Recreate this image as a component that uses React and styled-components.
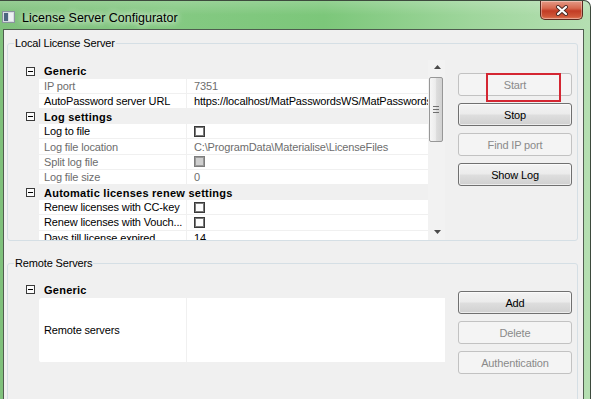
import React from 'react';
import styled, { createGlobalStyle, css } from 'styled-components';

const Global = createGlobalStyle`
  html, body { margin: 0; padding: 0; background: #ffffff; }
  body { font-family: "Liberation Sans", Arial, sans-serif; font-size: 11px; color: #000; letter-spacing: -0.15px; }
  * { box-sizing: border-box; }
`;

const Screen = styled.div`
  width: 593px;
  height: 399px;
  overflow: hidden;
  background: #ffffff;
`;

const Window = styled.div`
  width: 591px;
  height: 440px;
  display: flex;
  flex-direction: column;
  background:
    linear-gradient(180deg, rgba(255,255,255,0.18) 0px, rgba(255,255,255,0) 14px),
    linear-gradient(90deg, #7fc17c 0%, #84c982 30%, #7cc77a 55%, #9fd69c 80%, #b5dfb2 100%);
  border-top: 1px solid #3d4a3d;
  border-right: 1px solid #3d4a3d;
  border-top-right-radius: 7px;
`;

const TitleBar = styled.div`
  height: 28px;
  display: flex;
  align-items: flex-start;
  padding-left: 2px;
`;

const AppIcon = styled.svg`
  margin-top: 10px;
  flex: none;
`;

const Title = styled.div`
  margin-left: 7px;
  margin-top: 9px;
  font-family: "Liberation Sans", Arial, sans-serif;
  font-size: 12.5px;
  letter-spacing: 0;
  line-height: 16px;
  color: #000;
  text-shadow: 0 0 6px rgba(255,255,255,0.95), 0 0 10px rgba(255,255,255,0.8);
`;

const CloseButton = styled.div`
  margin-left: auto;
  margin-right: 7px;
  width: 43px;
  height: 19px;
  display: flex;
  align-items: center;
  justify-content: center;
  border: 1px solid #5b2a20;
  border-top: none;
  border-radius: 0 0 5px 5px;
  background: linear-gradient(180deg, #e49a86 0%, #d7694f 40%, #c23c25 55%, #cf5638 85%, #e07a5a 100%);
  box-shadow: inset 0 0 0 1px rgba(255,255,255,0.35);
`;

const Client = styled.div`
  flex: 1;
  margin: 0 6px 0 3px;
  background: #f0f0f0;
  border: 1px solid #4f5d4f;
  border-bottom: none;
  padding-top: 7px;
  display: flex;
  flex-direction: column;
  gap: 16px;
`;

const Group = styled.fieldset`
  margin: 0 5px 0 3px;
  padding: 0;
  min-width: 0;
  border: 1px solid #d5dfe5;
  border-radius: 3px;
`;

const GroupTitle = styled.legend`
  margin-left: 6px;
  padding: 0 1px;
  font-size: 11px;
  line-height: 13px;
  color: #000;
`;

const GroupBody = styled.div`
  display: flex;
  align-items: flex-start;
  gap: 13px;
  padding: ${p => p.$top}px 5px ${p => p.$bottom}px 12px;
`;

const PropertyGrid = styled.div`
  width: 425px;
  height: ${p => p.$height}px;
  display: flex;
  flex: none;
`;

const RowList = styled.div`
  flex: 1;
  min-width: 0;
  overflow: hidden;
  padding-top: ${p => p.$top}px;
`;

const CategoryRow = styled.div`
  display: flex;
  align-items: center;
  height: ${p => p.$h}px;
  background: #f0f0f0;
  white-space: nowrap;
`;

const Gutter = styled.div`
  width: 19px;
  flex: none;
  display: flex;
  align-items: center;
  justify-content: center;
  padding-left: 1px;
`;

const Expander = styled.div`
  width: 9px;
  height: 9px;
  border: 1px solid #3a3a3a;
  background: #fbfbfb;
  display: flex;
  align-items: center;
  justify-content: center;
  &::after {
    content: "";
    width: 5px;
    height: 1px;
    background: #000;
  }
`;

const CategoryName = styled.div`
  padding-left: 5px;
  font-weight: bold;
  letter-spacing: 0.25px;
`;

const PropRow = styled.div`
  display: grid;
  grid-template-columns: 19px 148px 1fr;
  height: ${p => p.$h}px;
  background: #f0f0f0;
`;

const NameCell = styled.div`
  background: #ffffff;
  border-right: 1px solid #f0f0f0;
  border-bottom: 1px solid #f0f0f0;
  padding-left: 5px;
  display: flex;
  align-items: center;
  white-space: nowrap;
  overflow: hidden;
  color: ${p => (p.$readOnly ? '#6d6d6d' : '#000')};
  border-radius: ${p => (p.$round ? '3px 0 0 3px' : '0')};
`;

const ValueCell = styled.div`
  background: #ffffff;
  border-bottom: 1px solid #f0f0f0;
  padding-left: 7px;
  display: flex;
  align-items: center;
  white-space: nowrap;
  overflow: hidden;
  color: ${p => (p.$readOnly ? '#6d6d6d' : '#000')};
`;

const CheckBox = styled.div`
  width: 11px;
  height: 11px;
  flex: none;
  ${p => (p.$disabled
    ? css`border: 1px solid #7d7d7d; box-shadow: inset 0 0 0 1px #9a9a9a; background: #cfcfcf;`
    : css`border: 1px solid #3a3a3a; box-shadow: inset 0 0 0 1px #7a7a7a; background: #fdfdfd;`)}
`;

const ScrollBar = styled.div`
  width: 17px;
  flex: none;
  display: flex;
  flex-direction: column;
  background: #f2f2f2;
`;

const ScrollArrow = styled.div`
  height: 17px;
  display: flex;
  justify-content: center;
  align-items: ${p => (p.$up ? 'flex-start' : 'center')};
  padding-top: ${p => (p.$up ? 5 : 0)}px;
  padding-left: 1px;
`;

const ScrollThumb = styled.div`
  height: 65px;
  margin: 0 2px 0 1px;
  border: 1px solid #979797;
  border-radius: 2px;
  background: linear-gradient(90deg, #f6f6f6 0%, #ececec 45%, #dcdcdc 55%, #d2d2d2 100%);
  display: flex;
  flex-direction: column;
  align-items: center;
  justify-content: center;
  gap: 2px;
`;

const Grip = styled.div`
  width: 6px;
  height: 1px;
  background: #6f6f6f;
`;

const ScrollTrack = styled.div`
  flex: 1;
`;

const ButtonColumn = styled.div`
  display: flex;
  flex-direction: column;
  gap: 7px;
  margin-top: ${p => p.$top}px;
  flex: none;
`;

const Button = styled.button`
  width: 114px;
  height: 23px;
  padding: 0;
  font-family: "Liberation Sans", Arial, sans-serif;
  font-size: 11px;
  letter-spacing: -0.15px;
  border-radius: 3px;
  ${p => (p.disabled
    ? css`border: 1px solid #c2c2c2; background: #f4f4f4; color: #8a8a8a;`
    : css`border: 1px solid #707070; background: linear-gradient(180deg, #f3f3f3 0%, #ebebeb 48%, #dedede 52%, #d0d0d0 100%); color: #000; box-shadow: inset 0 0 0 1px rgba(255,255,255,0.6);`)}
`;

const Annotated = styled.div`
  position: relative;
`;

const RedMark = styled.div`
  position: absolute;
  left: 28px;
  top: 0;
  width: 75px;
  height: 29px;
  border: 2px solid #d42632;
  pointer-events: none;
`;

const ROW = 15.2;

const localRows = [
  { cat: 'Generic' },
  { name: 'IP port', value: '7351', ro: true },
  { name: 'AutoPassword server URL', value: 'https://localhost/MatPasswordsWS/MatPasswordsWS.svc' },
  { cat: 'Log settings' },
  { name: 'Log to file', check: true },
  { name: 'Log file location', value: 'C:\\ProgramData\\Materialise\\LicenseFiles', ro: true },
  { name: 'Split log file', check: true, ro: true },
  { name: 'Log file size', value: '0', ro: true },
  { cat: 'Automatic licenses renew settings' },
  { name: 'Renew licenses with CC-key', check: true },
  { name: 'Renew licenses with Vouch...', check: true },
  { name: 'Days till license expired', value: '14' },
];

function Category({ title, h }) {
  return (
    <CategoryRow $h={h}>
      <Gutter><Expander /></Gutter>
      <CategoryName>{title}</CategoryName>
    </CategoryRow>
  );
}

function Arrow({ up }) {
  return (
    <svg width="7" height="4" viewBox="0 0 7 4">
      <path d={up ? 'M0 4 L3.5 0 L7 4 Z' : 'M0 0 L3.5 4 L7 0 Z'} fill="#4a4a4a" />
    </svg>
  );
}

export default function App() {
  return (
    <Screen>
      <Global />
      <Window>
        <TitleBar>
          <AppIcon width="13" height="12" viewBox="0 0 13 12">
            <rect x="0.5" y="0.5" width="12" height="11" fill="#d8dde3" stroke="#8a949e" />
            <rect x="2" y="2" width="4" height="8" fill="#4d6680" />
            <rect x="7" y="2" width="4" height="8" fill="#eef1f4" />
          </AppIcon>
          <Title>License Server Configurator</Title>
          <CloseButton>
            <svg width="14" height="11" viewBox="0 0 14 11">
              <path d="M3 2 L11 9 M11 2 L3 9" stroke="#4a2a24" strokeWidth="4" strokeLinecap="round" />
              <path d="M3 2 L11 9 M11 2 L3 9" stroke="#ffffff" strokeWidth="2.2" strokeLinecap="round" />
            </svg>
          </CloseButton>
        </TitleBar>
        <Client>
          <Group>
            <GroupTitle>Local License Server</GroupTitle>
            <GroupBody $top={10} $bottom={0}>
              <PropertyGrid $height={180}>
                <RowList $top={3.5}>
                  {localRows.map((r, i) =>
                    r.cat ? (
                      <Category key={i} title={r.cat} h={ROW} />
                    ) : (
                      <PropRow key={i} $h={ROW}>
                        <div />
                        <NameCell $readOnly={r.ro}>{r.name}</NameCell>
                        <ValueCell $readOnly={r.ro}>
                          {r.check ? <CheckBox $disabled={r.ro} /> : r.value}
                        </ValueCell>
                      </PropRow>
                    )
                  )}
                </RowList>
                <ScrollBar>
                  <ScrollArrow $up><Arrow up /></ScrollArrow>
                  <ScrollThumb>
                    <Grip /><Grip /><Grip />
                  </ScrollThumb>
                  <ScrollTrack />
                  <ScrollArrow><Arrow /></ScrollArrow>
                </ScrollBar>
              </PropertyGrid>
              <ButtonColumn $top={13}>
                <Annotated>
                  <Button disabled>Start</Button>
                  <RedMark />
                </Annotated>
                <Button>Stop</Button>
                <Button disabled>Find IP port</Button>
                <Button>Show Log</Button>
              </ButtonColumn>
            </GroupBody>
          </Group>
          <Group>
            <GroupTitle>Remote Servers</GroupTitle>
            <GroupBody $top={11} $bottom={40}>
              <PropertyGrid $height={82}>
                <RowList $top={0}>
                  <Category title="Generic" h={17} />
                  <PropRow $h={65}>
                    <div />
                    <NameCell $round>Remote servers</NameCell>
                    <ValueCell />
                  </PropRow>
                </RowList>
              </PropertyGrid>
              <ButtonColumn $top={10}>
                <Button>Add</Button>
                <Button disabled>Delete</Button>
                <Button disabled>Authentication</Button>
              </ButtonColumn>
            </GroupBody>
          </Group>
        </Client>
      </Window>
    </Screen>
  );
}
